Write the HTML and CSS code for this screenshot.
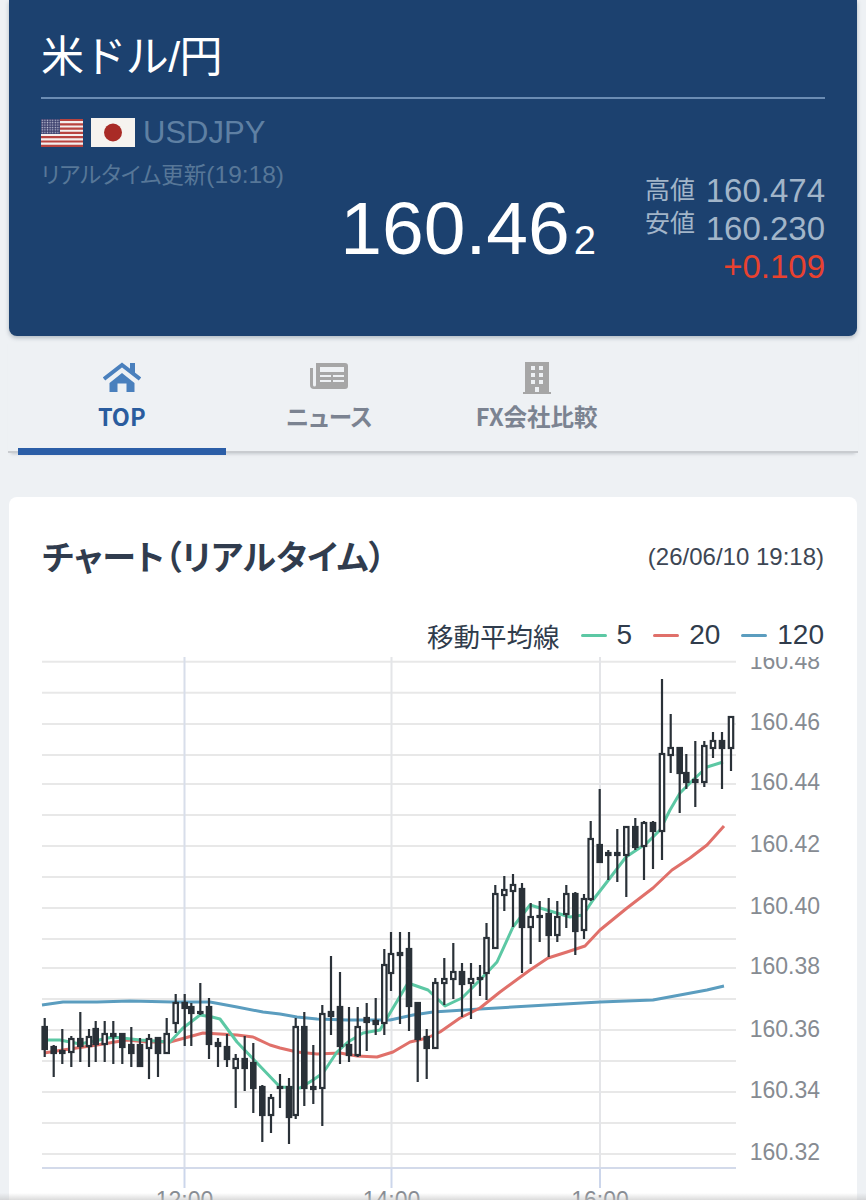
FILE: index.html
```html
<!DOCTYPE html>
<html lang="ja">

<head>
    <meta charset="UTF-8">
    <meta name="viewport" content="width=device-width, initial-scale=1.0">
    <title>米ドル/円</title>
    <link rel="stylesheet" href="styles.css">
</head>

<body>

    <section class="rate">
        <h1 class="rate-title">米ドル/円</h1>
        <div class="pair">
            <svg class="flag flag-us" viewBox="0 0 42 28">
                <defs>
                    <pattern id="stars" width="2.6" height="2.4" patternUnits="userSpaceOnUse">
                        <rect width="2.6" height="2.4" fill="#3f4370"/>
                        <circle cx="1.3" cy="1.2" r=".7" fill="#c9cbdc"/>
                    </pattern>
                </defs>
                <rect width="42" height="28" fill="#f4efee"/>
                <path d="M0 1h42M0 5.3h42M0 9.6h42M0 13.9h42M0 18.2h42M0 22.5h42M0 26.8h42" stroke="#b8433f" stroke-width="2.2"/>
                <rect width="19" height="15" fill="url(#stars)"/>
            </svg>
            <svg class="flag flag-jp" viewBox="0 0 44 29">
                <rect width="44" height="29" fill="#f6f3ef"/>
                <circle cx="22" cy="14.5" r="9" fill="#a92b26"/>
            </svg>
            <span class="pair-code">USDJPY</span>
        </div>
        <p class="updated">リアルタイム更新<span>(19:18)</span></p>
        <div class="quote">
            <p class="bid">160.46<small>2</small></p>
            <div class="range">
                <div class="range-row"><span>高値</span><b>160.474</b></div>
                <div class="range-row"><span>安値</span><b>160.230</b></div>
                <div class="change">+0.109</div>
            </div>
        </div>
    </section>

    <nav class="tabs">
        <a class="tab active">
            <svg class="tab-icon" width="38" height="30" viewBox="0 0 38 30">
                <path d="M19 11 6.500 21V30h8V21.500h9V30h8V21z"/>
                <path d="M1 17 19 3l18 14" fill="none" stroke="#4a80bd" stroke-width="4"/>
                <path d="M27 1h5v11l-5-4z"/>
            </svg>
            <span>TOP</span>
        </a>
        <a class="tab">
            <svg class="tab-icon" width="38" height="26" viewBox="0 0 38 26">
                <path fill-rule="evenodd" d="M6 0h29a3 3 0 0 1 3 3v20a3 3 0 0 1-3 3H4a4 4 0 0 1-4-4V5h3v17a1.500 1.500 0 0 0 3 0zm4 4v5h24V4zm0 8v2h11v-2zm13 0v2h11v-2zM10 17v2h11v-2zm13 0v2h11v-2z"/>
            </svg>
            <span>ニュース</span>
        </a>
        <a class="tab">
            <svg class="tab-icon" width="28" height="32" viewBox="0 0 28 32">
                <path fill-rule="evenodd" d="M2 0h24v30h2v2H0v-2h2zm6 4v4h4V4zm8 0v4h4V4zM8 11v4h4v-4zm8 0v4h4v-4zM8 18v4h4v-4zm8 0v4h4v-4zm-4 7v5h4v-5z"/>
            </svg>
            <span>FX会社比較</span>
        </a>
    </nav>

    <section class="chart-card">
        <div class="chart-head">
            <h2>チャート（リアルタイム）</h2>
            <span class="chart-date">(26/06/10 19:18)</span>
        </div>
        <div class="legend">
            <span class="legend-title">移動平均線</span>
            <span class="legend-item"><i class="ma5"></i>5</span>
            <span class="legend-item"><i class="ma20"></i>20</span>
            <span class="legend-item"><i class="ma120"></i>120</span>
        </div>
        <svg id="chart" class="chart" width="848" height="543" viewBox="9 657 848 543"></svg>
    </section>

    <div class="bottom-shade"></div>

    <script src="chart.js"></script>

</body>

</html>
```

FILE: styles.css
```css
html, body {
    height: 1200px;
    overflow: hidden;
}

body {
    margin: 0;
    background-color: #eef1f4;
    font-family: "Liberation Sans", "Noto Sans CJK JP", sans-serif;
    color: #2f3b4c;
}

h1, h2, p {
    margin: 0;
    font-weight: normal;
}

.rate {
    box-sizing: border-box;
    height: 336px;
    margin: 0 9px;
    padding: 30px 32px 0;
    background: #1c416f;
    border-radius: 0 0 8px 8px;
    box-shadow: 0 2px 4px rgba(60, 80, 100, .35);
    color: white;
}

.rate-title {
    height: 67px;
    border-bottom: 2px solid #6b8cb3;
    font-size: 43px;
    line-height: 54px;
    letter-spacing: -.6px;
}

.pair {
    display: flex;
    align-items: center;
    gap: 8px;
    height: 29px;
    margin-top: 19px;
}

.flag {
    display: block;
}

.flag-us {
    width: 42px;
    height: 28px;
}

.flag-jp {
    width: 44px;
    height: 29px;
}

.pair-code {
    font-size: 31px;
    color: #5f80a3;
}

.updated {
    margin-top: 14px;
    font-size: 22.500px;
    line-height: 28px;
    color: #577798;
    font-feature-settings: "palt";
}

.updated span {
    font-size: 24.500px;
}

.quote {
    display: flex;
    justify-content: flex-end;
    align-items: flex-start;
    gap: 49px;
    margin-top: -16px;
}

.bid {
    margin-top: 14px;
    font-size: 75px;
    line-height: 80px;
}

.bid small {
    margin-left: 4px;
    font-size: 40px;
}

.range {
    width: 180px;
    margin-top: -2px;
}

.range-row {
    display: flex;
    justify-content: space-between;
    align-items: flex-start;
    height: 38px;
    font-size: 25px;
    line-height: 30px;
    color: #a2b5c9;
}

.range-row span {
    margin-top: 3px;
}

.range-row + .range-row span {
    margin-top: -2px;
}

.range-row b {
    font-weight: normal;
    font-size: 33px;
    line-height: 38px;
}

.change {
    font-size: 33px;
    line-height: 38px;
    text-align: right;
    color: #e8412f;
}

.tabs {
    display: flex;
    box-sizing: border-box;
    height: 117px;
    margin: 0 8px;
    padding-left: 10px;
    border-bottom: 2px solid #c9ccd0;
    box-shadow: 0 4px 3px -3px rgba(120, 130, 140, .35);
}

.tab {
    position: relative;
    display: flex;
    flex-direction: column;
    align-items: center;
    width: 207.500px;
    font-family: "Noto Sans CJK JP", sans-serif;
    font-size: 23.500px;
    font-weight: bold;
    font-feature-settings: "palt";
    color: #7b8391;
    fill: #a6a6a6;
}

.tab span {
    position: absolute;
    top: 65px;
    line-height: 30px;
    white-space: nowrap;
}

.tab-icon {
    margin-top: 27px;
}

.tab:first-child .tab-icon {
    margin-top: 26px;
}

.tab:last-child .tab-icon {
    margin-top: 26px;
}

.tab.active {
    color: #2a5c9e;
    fill: #4a80bd;
}

.tab.active::after {
    content: "";
    position: absolute;
    left: 0;
    right: 0;
    bottom: -4px;
    height: 7px;
    background: #2b5ea7;
}

.chart-card {
    height: 703px;
    margin: 44px 9px 0;
    background: white;
    border-radius: 8px 8px 0 0;
}

.chart-head {
    display: flex;
    justify-content: space-between;
    align-items: center;
    height: 40px;
    padding: 40px 33px 0;
}

.chart-head h2 {
    margin-top: -4px;
    font-size: 34px;
    font-weight: bold;
    color: #303c4e;
    font-feature-settings: "palt";
    letter-spacing: .2px;
}

.chart-date {
    font-size: 24px;
    color: #3d4654;
}

.legend {
    display: flex;
    justify-content: flex-end;
    align-items: center;
    gap: 21px;
    height: 40px;
    margin-top: 38px;
    padding-right: 33px;
    font-size: 28px;
    color: #303c4c;
}

.legend-title {
    font-size: 26.500px;
}

.legend-item {
    display: flex;
    align-items: center;
    gap: 10px;
}

.legend-item i {
    width: 26px;
    height: 3px;
    border-radius: 2px;
}

.ma5 { background: #5cc8a4; }
.ma20 { background: #e0706a; }
.ma120 { background: #5b9dbf; }

.chart {
    display: block;
    margin-top: 2px;
}

.chart text {
    font-size: 23px;
    fill: #868b92;
}

.bottom-shade {
    position: fixed;
    left: 0;
    right: 0;
    bottom: 0;
    height: 7px;
    background: linear-gradient(rgba(190, 190, 190, 0), rgba(190, 190, 190, .55));
}
```

FILE: chart.js
```js
// x, high, low, body top, body bottom, filled
var candles = [
    [44.7, 1018, 1057, 1027, 1049, 1], [53.7, 1045, 1077, 1047, 1053, 1], [62.3, 1029, 1064, 1051, 1053, 1],
    [71.3, 1036, 1067, 1039, 1052, 0], [80.3, 1012, 1062, 1039, 1046, 1], [89, 1029, 1067, 1037, 1046, 0],
    [95.7, 1021, 1062, 1029, 1044, 1], [104.7, 1021, 1062, 1034, 1044, 0], [113.3, 1021, 1064, 1034, 1036, 1],
    [122.3, 1034, 1064, 1034, 1047, 1], [131.3, 1027, 1067, 1045, 1053, 1], [140, 1038, 1067, 1045, 1066, 1],
    [149, 1034, 1079, 1039, 1048, 0], [158, 1038, 1077, 1038, 1053, 1], [166.7, 1018, 1053, 1034, 1053, 0],
    [175.7, 994, 1033, 1003, 1023, 0], [184.7, 994, 1046, 1003, 1008, 1], [191.3, 1003, 1046, 1007, 1013, 1],
    [200.3, 983, 1015, 1012, 1013, 1], [209, 998, 1059, 1007, 1044, 1], [218, 1038, 1067, 1043, 1046, 1],
    [227, 1034, 1067, 1047, 1059, 1], [235.7, 1054, 1108, 1059, 1068, 0], [244.7, 1036, 1091, 1059, 1068, 1],
    [253.3, 1043, 1113, 1063, 1088, 1], [262.3, 1085, 1142, 1087, 1115, 1], [271, 1094, 1133, 1098, 1115, 0],
    [280, 1074, 1108, 1087, 1088, 1], [289, 1078, 1144, 1087, 1117, 1], [295.7, 1018, 1119, 1027, 1115, 0],
    [304.3, 1012, 1106, 1027, 1088, 1], [313.3, 1045, 1104, 1087, 1089, 1], [322.3, 1005, 1126, 1014, 1088, 0],
    [331, 956, 1035, 1012, 1016, 1], [340, 972, 1064, 1007, 1046, 1], [349, 1007, 1062, 1045, 1055, 1],
    [357.7, 1007, 1057, 1027, 1055, 0], [366.7, 1003, 1051, 1018, 1022, 1], [375.7, 998, 1035, 1021, 1024, 1],
    [384.3, 949, 1035, 965, 1023, 0], [391, 932, 991, 954, 973, 0], [400, 932, 1024, 953, 955, 1],
    [409, 932, 1031, 949, 1006, 1], [417.7, 1003, 1082, 1003, 1039, 1], [426.7, 1029, 1079, 1037, 1048, 1],
    [435.3, 978, 1048, 983, 1048, 0], [444.3, 958, 1005, 979, 983, 0], [453.3, 943, 999, 972, 979, 0],
    [462, 963, 1017, 972, 984, 1], [471, 963, 1019, 979, 983, 0], [480, 965, 996, 978, 979, 1],
    [486.5, 923, 1000, 938, 973, 0], [495.3, 885, 948, 894, 948, 0], [504.3, 876, 911, 890, 895, 0],
    [513, 874, 927, 885, 891, 0], [522, 883, 973, 889, 927, 1], [530.7, 903, 964, 917, 927, 0],
    [539.7, 901, 942, 916, 917, 1], [548.7, 898, 957, 914, 935, 1], [557.3, 901, 942, 917, 935, 0],
    [566.3, 885, 928, 894, 914, 0], [575.3, 892, 955, 894, 931, 1], [584, 894, 939, 899, 930, 0],
    [590.7, 821, 901, 839, 899, 0], [599.7, 789, 862, 845, 862, 1], [608.3, 850, 880, 853, 855, 1],
    [617.3, 829, 882, 853, 855, 1], [626.3, 827, 897, 827, 855, 0], [635.3, 818, 850, 827, 847, 1],
    [644, 821, 880, 823, 846, 0], [653, 821, 869, 823, 831, 1], [662, 679, 860, 754, 831, 0],
    [670.7, 714, 773, 748, 755, 0], [679.7, 748, 813, 748, 773, 1], [686.3, 754, 789, 773, 782, 1],
    [695.3, 741, 807, 780, 782, 1], [704.3, 741, 787, 746, 782, 0], [713, 732, 758, 741, 748, 0],
    [722, 732, 789, 741, 748, 1], [731, 717, 771, 717, 748, 0]
];

var ma120 = "42,1005 63,1002 97,1002 130,1001 173,1002 210,1002 237,1007 263,1012 280,1014 297,1017 317,1019 347,1020 390,1020 413,1015 433,1012 480,1009 497,1008 547,1005 600,1002 653,1000 680,995 707,990 724,986";
var ma20 = "44,1053 63,1050 97,1045 127,1040 147,1042 170,1042 203,1033 237,1035 253,1037 270,1045 280,1048 297,1052 317,1054 340,1053 357,1056 377,1057 393,1052 410,1042 427,1038 440,1032 460,1018 480,1008 500,992 530,970 548,958 567,952 585,946 600,930 627,908 653,888 672,870 690,858 707,845 724,826";
var ma5 = "44,1040 60,1040 80,1044 113,1037 140,1040 170,1042 183,1028 200,1015 212,1017 220,1019 237,1042 257,1063 280,1087 300,1088 313,1080 323,1073 337,1052 348,1042 363,1033 380,1030 393,1008 408,983 428,990 445,1006 462,998 480,980 497,962 513,927 530,905 570,917 583,915 593,900 610,878 626,857 647,843 660,830 670,810 680,793 693,780 707,767 723,762";

var gridY = [661.7, 692.7, 724, 755, 784, 815, 846, 877, 908, 939, 968, 999, 1030, 1061, 1092, 1123, 1154];
var axisY = [[160.48, 669], [160.46, 730], [160.44, 790], [160.42, 852], [160.40, 914], [160.38, 974], [160.36, 1037], [160.34, 1098], [160.32, 1160]];
var axisX = [[184.5, "12:00", "#d8deea"], [391.5, "14:00", "#e4e5e8"], [600, "16:00", "#e4e5e8"]];

var out = "";

gridY.forEach(function (y) {
    out += '<path d="M42 ' + y + 'H736" stroke="#e8e8e8" stroke-width="2"/>';
});
axisX.forEach(function (a) {
    out += '<path d="M' + a[0] + ' 657V1168" stroke="' + a[2] + '" stroke-width="2"/>';
    out += '<path d="M' + a[0] + ' 1168V1188" stroke="#ccd6eb" stroke-width="2"/>';
    out += '<text x="' + a[0] + '" y="1208" text-anchor="middle">' + a[1] + '</text>';
});
out += '<path d="M42 1168H736" stroke="#d3daea" stroke-width="2"/>';
axisY.forEach(function (a) {
    out += '<text x="820" y="' + a[1] + '" text-anchor="end">' + a[0].toFixed(2) + '</text>';
});

[[ma120, "#5b9dbf"], [ma20, "#e0706a"], [ma5, "#5cc8a4"]].forEach(function (m) {
    out += '<polyline points="' + m[0] + '" fill="none" stroke="' + m[1] + '" stroke-width="3" stroke-linejoin="round"/>';
});

candles.forEach(function (c) {
    out += '<path d="M' + c[0] + ' ' + c[1] + 'V' + c[2] + '" stroke="#2a3138" stroke-width="2.200"/>';
    out += '<rect x="' + (c[0] - 2.2) + '" y="' + c[3] + '" width="4.400" height="' + (c[4] - c[3]) + '" fill="' + (c[5] ? "#2a3138" : "white") + '" stroke="#2a3138" stroke-width="2.200"/>';
});

document.getElementById("chart").innerHTML = out;
```
